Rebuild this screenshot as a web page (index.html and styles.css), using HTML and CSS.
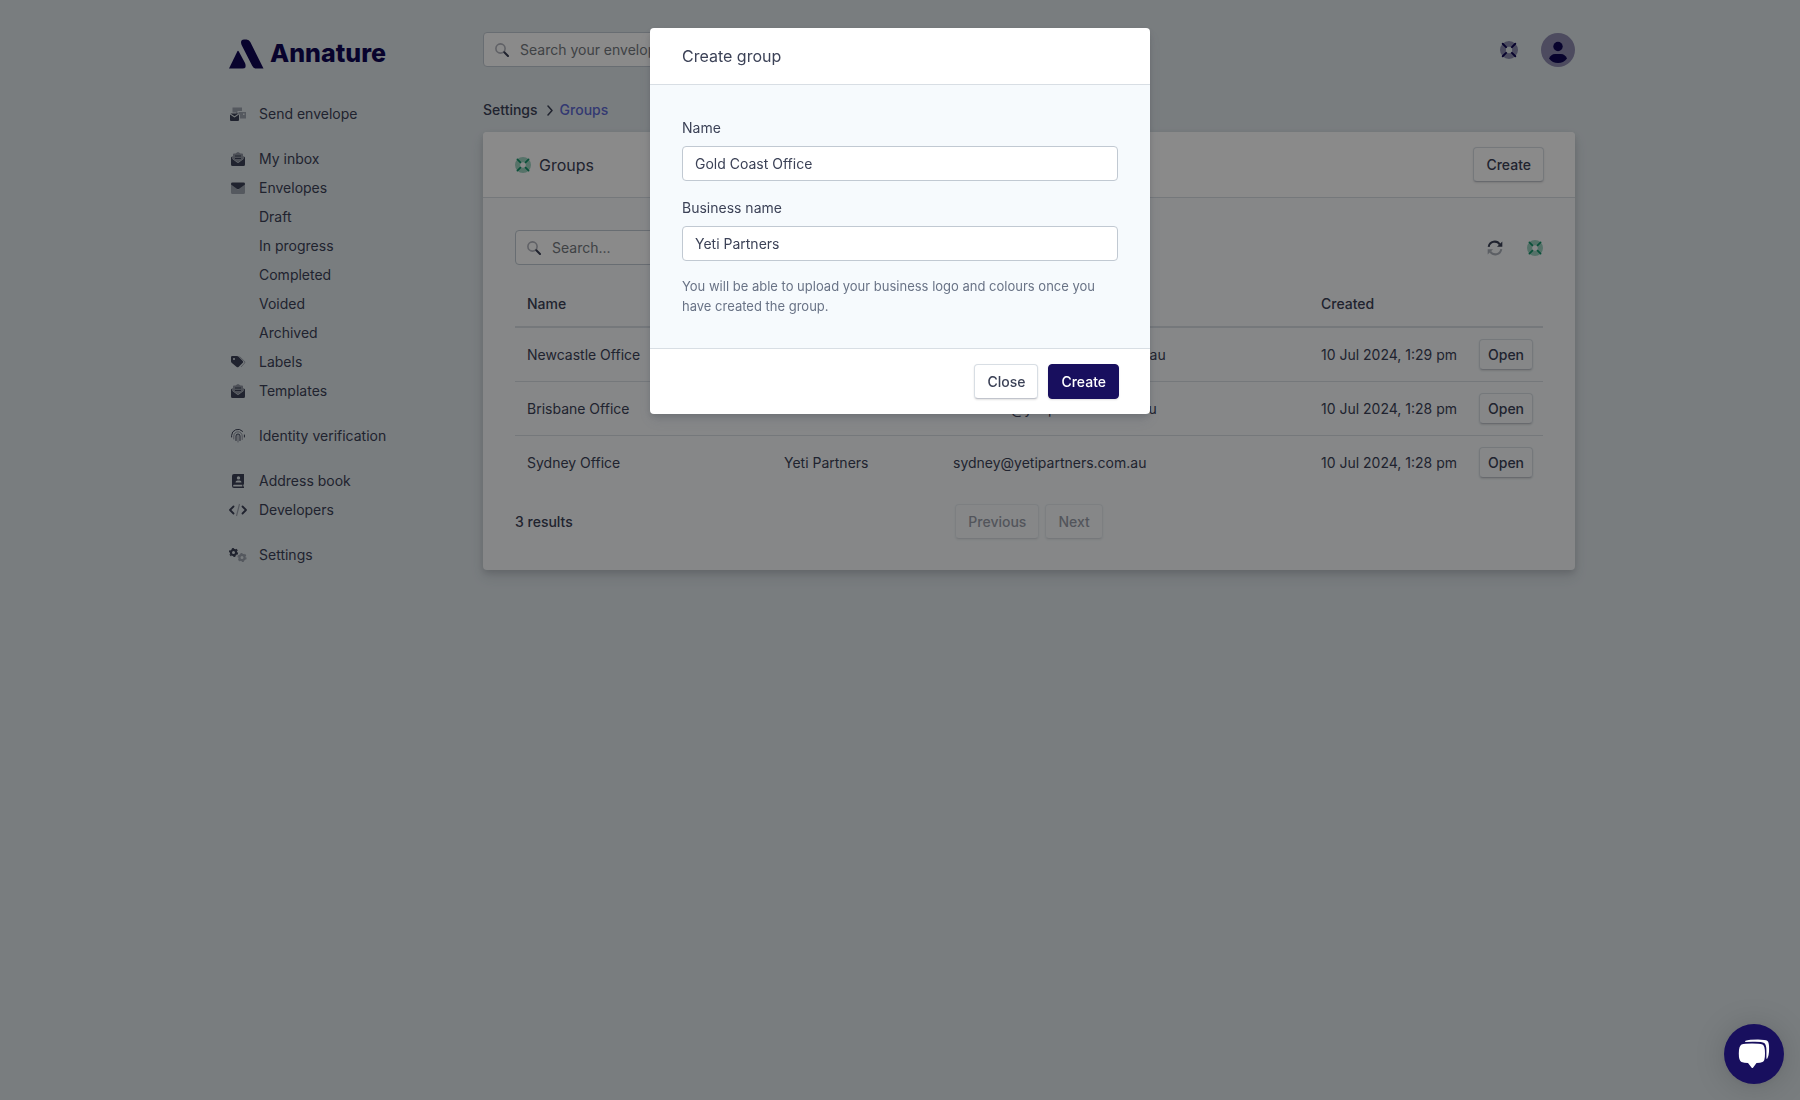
FILE: index.html
```html
<!DOCTYPE html>
<html lang="en">
<head>
    <meta charset="UTF-8">
    <meta name="viewport" content="width=device-width, initial-scale=1.0">
    <title>Groups - Annature</title>
    <link rel="stylesheet" href="styles.css">
</head>
<body>
    <!-- shared icons -->
    <svg class="sprite" aria-hidden="true">
        <symbol id="icon-ring" viewBox="0 0 16 16">
            <path opacity=".4" fill-rule="evenodd" d="M8 0a8 8 0 1 0 0 16A8 8 0 0 0 8 0zm0 5.200a2.800 2.800 0 1 1 0 5.600 2.800 2.800 0 0 1 0-5.600z"/>
            <path d="M2.400 2.400l3 3M13.600 2.400l-3 3M2.400 13.600l3-3M13.600 13.600l-3-3" stroke="currentColor" stroke-width="1.700" stroke-linecap="round"/>
        </symbol>
        <symbol id="icon-search" viewBox="0 0 14 14">
            <circle cx="5.500" cy="5.500" r="4.600" fill="none" stroke="currentColor" stroke-width="1.600" opacity=".4"/>
            <path d="M9.300 9.300l3.700 3.700" stroke="currentColor" stroke-width="2" stroke-linecap="round"/>
        </symbol>
        <symbol id="icon-open" viewBox="0 0 16 16">
            <path opacity=".5" d="M3 8V3.500Q3 2.500 4 2.500h1.500L7 1.400q1-.8 2 0l1.500 1.100H12q1 0 1 1V8l-4.200 3q-.8.500-1.600 0z"/>
            <path d="M1 6.500L2.500 5v3.100l4.600 3.300q.9.600 1.800 0l4.600-3.300V5L15 6.500v7a1.500 1.500 0 0 1-1.500 1.500h-11A1.500 1.500 0 0 1 1 13.500z"/>
            <path d="M5 4.500h6v1H5zM5 7h6v1H5z"/>
        </symbol>
    </svg>

    <div class="page">
        <aside class="sidebar">
            <a class="logo" href="#">
                <svg width="36" height="30" viewBox="0 0 36 30" aria-hidden="true">
                    <path d="M1 29.500L9.300 12.500Q10 11.200 10.800 12.500L17 24q2.300 5.500-2.500 5.500z"/>
                    <path d="M16 .5h2.500q2.600 0 3.800 2.600L35.500 29.500H28q-2.400 0-3.700-2.600L13.600 6Q11.700.8 16 .5z"/>
                </svg>
                <span>Annature</span>
            </a>
            <nav class="menu">
                <ul>
                    <li><a href="#">
                        <svg class="icon" viewBox="0 0 16 16" aria-hidden="true"><path opacity=".4" d="M2.500 1.500h9.500V5H7.500v3H6V6.500H2.500zM8.500 6H16v6.500H10V8.500H8.500zM13 7.500v1.500h1.500V7.500z" fill-rule="evenodd"/><path d="M0 8.500l4.500 3 4.500-3V14a1 1 0 0 1-1 1H1a1 1 0 0 1-1-1zM.5 7.500h8L4.500 10.200z"/></svg>
                        Send envelope</a></li>
                </ul>
                <ul>
                    <li><a href="#"><svg class="icon" aria-hidden="true"><use href="#icon-open"/></svg>My inbox</a></li>
                    <li><a href="#">
                        <svg class="icon" viewBox="0 0 16 16" aria-hidden="true"><path opacity=".4" d="M1 4l7 6 7-6v8.500A1.500 1.500 0 0 1 13.500 14h-11A1.500 1.500 0 0 1 1 12.500z"/><path d="M1 4.500V3.500Q1 2.500 2.500 2.500h11q1.500 0 1.500 1v1L9 9Q8 9.700 7 9z"/></svg>
                        Envelopes</a>
                        <ul class="submenu">
                            <li><a href="#">Draft</a></li>
                            <li><a href="#">In progress</a></li>
                            <li><a href="#">Completed</a></li>
                            <li><a href="#">Voided</a></li>
                            <li><a href="#">Archived</a></li>
                        </ul>
                    </li>
                    <li><a href="#">
                        <svg class="icon" viewBox="0 0 16 16" aria-hidden="true"><path opacity=".4" fill="none" stroke="currentColor" d="M9.500 2.500l5 4.800q.7.900 0 1.800L11 13"/><path fill-rule="evenodd" d="M1 3.200Q1 2 2.200 2H7q.8 0 1.400.6l4.400 4.300q.9.900 0 1.800l-4.300 4.200q-.9.900-1.800 0L1.600 8.700Q1 8.100 1 7.300zM4 4a1 1 0 1 0 0 2 1 1 0 0 0 0-2z"/></svg>
                        Labels</a></li>
                    <li><a href="#"><svg class="icon" aria-hidden="true"><use href="#icon-open"/></svg>Templates</a></li>
                </ul>
                <ul>
                    <li><a href="#">
                        <svg class="icon stroked" viewBox="0 0 16 16" aria-hidden="true"><path d="M1.600 9V7.500a6.400 6.400 0 0 1 11-4.200M14.400 7v2"/><path opacity=".5" d="M3.800 11V8a4.200 4.200 0 0 1 8.400 0v3.500M8 7.500V14"/><path d="M6 12.500V8a2 2 0 0 1 4 0v4.500"/></svg>
                        Identity verification</a></li>
                </ul>
                <ul>
                    <li><a href="#">
                        <svg class="icon" viewBox="0 0 16 16" aria-hidden="true"><path fill-rule="evenodd" d="M4 1h10v10.500h-.7v2H14V15H4a2 2 0 0 1-2-2V3a2 2 0 0 1 2-2zm4.500 2.200a1.700 1.700 0 1 0 0 3.400 1.700 1.700 0 0 0 0-3.400zM5.500 9.500h6q0-2-2-2h-2q-2 0-2 2zM4 11.800a.8.800 0 0 0 0 1.700h8.300v-1.700z"/></svg>
                        Address book</a></li>
                    <li><a href="#">
                        <svg class="icon wide" viewBox="0 0 18 14" aria-hidden="true"><path fill="none" stroke="currentColor" stroke-width="1.800" stroke-linecap="round" stroke-linejoin="round" d="M4.500 3.500L1 7l3.500 3.500M13.500 3.500L17 7l-3.500 3.500"/><path opacity=".4" stroke="currentColor" stroke-width="1.200" d="M10.500 1l-3 12"/></svg>
                        Developers</a></li>
                </ul>
                <ul>
                    <li><a href="#">
                        <svg class="icon wide" viewBox="0 0 18 14" aria-hidden="true"><circle cx="4.500" cy="4.500" r="2.600" fill="none" stroke="currentColor" stroke-width="2.200"/><circle cx="4.500" cy="4.500" r="4" fill="none" stroke="currentColor" stroke-width="1.200" stroke-dasharray="2 2.190"/><g opacity=".4"><circle cx="13" cy="9.500" r="2.600" fill="none" stroke="currentColor" stroke-width="2.200"/><circle cx="13" cy="9.500" r="4" fill="none" stroke="currentColor" stroke-width="1.200" stroke-dasharray="2 2.190"/></g></svg>
                        Settings</a></li>
                </ul>
            </nav>
        </aside>

        <main class="main">
            <header class="topbar">
                <div class="search">
                    <svg width="14" height="14" aria-hidden="true"><use href="#icon-search"/></svg>
                    <input type="search" placeholder="Search your envelopes..." aria-label="Search your envelopes">
                </div>
                <div class="topbar-actions">
                    <a class="help" href="#" aria-label="Help"><svg width="18" height="18"><use href="#icon-ring"/></svg></a>
                    <button class="avatar" type="button" aria-label="Account">
                        <svg width="34" height="34" viewBox="0 0 34 34"><circle cx="17" cy="13.500" r="4.700"/><path d="M8 25.500q2-4.500 6-4.500h6q4 0 6 4.500Q22.500 30 17 30t-9-4.500z"/></svg>
                    </button>
                </div>
            </header>

            <nav class="breadcrumb" aria-label="Breadcrumb">
                <a href="#">Settings</a>
                <svg width="8" height="12" viewBox="0 0 8 12" aria-hidden="true"><path d="M2 2l4 4.500L2 11" fill="none" stroke="currentColor" stroke-width="1.500" stroke-linecap="round" stroke-linejoin="round"/></svg>
                <a class="current" href="#">Groups</a>
            </nav>

            <section class="card">
                <div class="card-header">
                    <h1><svg class="green" width="16" height="16" aria-hidden="true"><use href="#icon-ring"/></svg>Groups</h1>
                    <button class="btn" type="button">Create</button>
                </div>
                <div class="card-body">
                    <div class="toolbar">
                        <div class="search">
                            <svg width="14" height="14" aria-hidden="true"><use href="#icon-search"/></svg>
                            <input type="search" placeholder="Search..." aria-label="Search groups">
                        </div>
                        <div class="toolbar-actions">
                            <button class="icon-btn" type="button" aria-label="Refresh">
                                <svg width="16" height="16" viewBox="0 0 16 16"><path d="M1.700 6.800A6 6 0 0 1 12.800 4.600" fill="none" stroke="currentColor" stroke-width="2"/><path d="M15.300 1.500v5.300H10z"/><g opacity=".4"><path d="M14.300 9.200A6 6 0 0 1 3.200 11.400" fill="none" stroke="currentColor" stroke-width="2"/><path d="M.7 14.500V9.200H6z"/></g></svg>
                            </button>
                            <a class="green" href="#" aria-label="Help with groups"><svg width="16" height="16"><use href="#icon-ring"/></svg></a>
                        </div>
                    </div>
                    <table>
                        <thead>
                            <tr><th class="col-name">Name</th><th class="col-business">Business name</th><th class="col-email">Email</th><th class="col-created">Created</th><th></th></tr>
                        </thead>
                        <tbody>
                            <tr><td>Newcastle Office</td><td>Yeti Partners</td><td>newcastle@yetipartners.com.au</td><td>10 Jul 2024, 1:29 pm</td><td><button class="btn btn-sm" type="button">Open</button></td></tr>
                            <tr><td>Brisbane Office</td><td>Yeti Partners</td><td>brisbane@yetipartners.com.au</td><td>10 Jul 2024, 1:28 pm</td><td><button class="btn btn-sm" type="button">Open</button></td></tr>
                            <tr><td>Sydney Office</td><td>Yeti Partners</td><td>sydney@yetipartners.com.au</td><td>10 Jul 2024, 1:28 pm</td><td><button class="btn btn-sm" type="button">Open</button></td></tr>
                        </tbody>
                    </table>
                    <div class="table-footer">
                        <span class="results">3 results</span>
                        <div class="pager">
                            <button class="btn" type="button" disabled>Previous</button>
                            <button class="btn" type="button" disabled>Next</button>
                        </div>
                    </div>
                </div>
            </section>
        </main>
    </div>

    <div class="overlay">
        <form class="modal" role="dialog" aria-modal="true" aria-labelledby="modal-title">
            <h2 class="modal-header" id="modal-title">Create group</h2>
            <div class="modal-body">
                <div class="field">
                    <label for="group-name">Name</label>
                    <input type="text" id="group-name" value="Gold Coast Office">
                </div>
                <div class="field">
                    <label for="business-name">Business name</label>
                    <input type="text" id="business-name" value="Yeti Partners">
                </div>
                <p>You will be able to upload your business logo and colours once you have created the group.</p>
            </div>
            <div class="modal-footer">
                <button class="btn" type="button">Close</button>
                <button class="btn btn-primary" type="submit">Create</button>
            </div>
        </form>
    </div>

    <button class="chat" type="button" aria-label="Open chat">
        <svg width="32" height="32" viewBox="0 0 32 32" aria-hidden="true">
            <path d="M7.500 2.800Q11 1.500 20 1.500q7.500 0 9.500 1.500 1.700 1.500 1.600 8 0 7-2.100 10l-.6-.5V12.500q0-6-2.200-7.500Q24 3.800 17 3.700 12 3.600 7 3.900z"/>
            <path d="M3.500 6.500Q6.500 5.500 14 5.500t10.500 1Q27 7.500 27 15.500T24.500 24q-2 .9-6 1l-3.300 4.500q-.9 1-1.700 0L10 25q-4-.1-6.500-1Q.8 23 .8 15.500T3.500 6.500z"/>
        </svg>
    </button>
</body>
</html>
```

FILE: styles.css
```css
* {
    box-sizing: border-box;
}
body {
    margin: 0;
    min-height: 100vh;
    background-color: #e0e7eb;
    color: #3c4257;
    font-family: Inter, "Liberation Sans", sans-serif;
    font-size: 14px;
    line-height: 21px;
}
a {
    color: inherit;
    text-decoration: none;
}
svg {
    display: block;
    fill: currentColor;
    flex: none;
}
ul {
    list-style: none;
    margin: 0;
    padding: 0;
}
input, button {
    font: inherit;
    color: inherit;
}
.sprite {
    position: absolute;
    width: 0;
    height: 0;
}
.page {
    display: flex;
    max-width: 1350px;
    margin: 0 auto;
    padding-top: 32px;
}

/* sidebar */
.sidebar {
    flex: 0 0 258px;
}
.logo {
    display: flex;
    align-items: center;
    gap: 6px;
    height: 43px;
    padding-left: 3px;
    color: #0f0754;
    font-size: 25px;
    font-weight: 800;
}
.menu {
    display: flex;
    flex-direction: column;
    gap: 16px;
    padding-top: 24px;
}
.menu a {
    display: flex;
    align-items: center;
    gap: 13px;
    height: 29px;
    padding-left: 5px;
}
.menu .icon {
    width: 16px;
    height: 16px;
}
.menu .wide {
    width: 18px;
    margin: 0 -1px;
}
.menu .stroked {
    fill: none;
    stroke: currentColor;
    stroke-linecap: round;
}
.submenu {
    padding-left: 29px;
}

/* top bar */
.main {
    flex: 1;
    min-width: 0;
}
.topbar, .topbar-actions, .toolbar, .toolbar-actions {
    display: flex;
    align-items: center;
}
.topbar, .toolbar, .card-header {
    justify-content: space-between;
}
.topbar-actions {
    gap: 23px;
}
.help {
    color: #0f0754;
}
.avatar {
    width: 34px;
    height: 34px;
    padding: 0;
    border: none;
    border-radius: 50%;
    background-color: #8e8bb0;
    color: #0f0754;
}
.search {
    display: flex;
    align-items: center;
    gap: 11px;
    width: 380px;
    height: 35px;
    padding: 0 11px;
    background-color: #fff;
    border: 1px solid #c1c9d2;
    border-radius: 4px;
}
.search input {
    flex: 1;
    padding: 0;
    border: none;
    background: none;
    outline: none;
}
.search input::placeholder {
    color: #757a80;
}
.breadcrumb {
    display: flex;
    align-items: center;
    gap: 6px;
    padding: 32px 0 12px;
    font-weight: 500;
}
.breadcrumb svg {
    margin-left: 2px;
}
.breadcrumb .current {
    color: #5e6ad2;
}

/* groups card */
.card {
    background-color: #f7fafc;
    border-radius: 4px;
    box-shadow: 0 7px 14px rgba(60, 66, 87, 0.12), 0 3px 6px rgba(0, 0, 0, 0.12);
}
.card-header {
    display: flex;
    align-items: center;
    padding: 15px 31px 15px 32px;
    background-color: #fff;
    border-bottom: 1px solid #d8dee4;
    border-radius: 4px 4px 0 0;
}
.card-header h1 {
    display: flex;
    align-items: center;
    gap: 8px;
    margin: 0;
    font-size: 16px;
    font-weight: 400;
    line-height: 24px;
}
.green {
    color: #12946a;
}
.card-body {
    padding: 32px 32px 31px;
}
.toolbar-actions {
    gap: 24px;
}
.icon-btn {
    padding: 0;
    border: none;
    background: none;
}
.btn {
    height: 35px;
    padding: 0 12px;
    background-color: #fff;
    border: 1px solid #d8dee4;
    border-bottom-color: #c1c4cc;
    border-radius: 4px;
    box-shadow: 0 1px 2px rgba(0, 0, 0, 0.12);
    font-weight: 500;
    cursor: pointer;
}
.card-body .btn {
    background-color: transparent;
}
.btn-sm {
    display: block;
    height: 31px;
    padding: 0 8px;
}
.btn:disabled {
    opacity: 0.5;
    cursor: default;
}
.btn-primary {
    background-color: #180f5e;
    border-color: #180f5e;
    color: #fff;
}
table {
    width: 100%;
    margin-top: 16px;
    border-collapse: separate;
    border-spacing: 0;
    table-layout: fixed;
}
th {
    height: 47px;
    padding: 0 12px;
    border-bottom: 2px solid #d8dee4;
    font-weight: 500;
    text-align: left;
}
td {
    height: 54px;
    padding: 0 12px;
    border-bottom: 1px solid #d8dee4;
    white-space: nowrap;
}
tr:last-child td {
    height: 53px;
    border-bottom: none;
}
.col-name {
    width: 25%;
}
.col-business {
    width: 169px;
}
.col-created {
    width: 158px;
}
th:last-child {
    width: 76px;
}
.table-footer {
    display: grid;
    grid-template-columns: 1fr auto 1fr;
    align-items: center;
    padding-top: 15px;
}
.results {
    font-weight: 500;
}
.pager {
    display: flex;
    gap: 6px;
}

/* create group modal */
.overlay {
    position: fixed;
    inset: 0;
    display: flex;
    justify-content: center;
    align-items: flex-start;
    padding-top: 28px;
    background-color: rgba(0, 0, 0, 0.46);
}
.modal {
    width: 500px;
    background-color: #fff;
    border-radius: 4px;
    box-shadow: 0 7px 14px rgba(60, 66, 87, 0.12), 0 3px 6px rgba(0, 0, 0, 0.12);
}
.modal-header {
    margin: 0;
    padding: 16px 32px;
    border-bottom: 1px solid #d8dee4;
    font-size: 16px;
    font-weight: 400;
    line-height: 24px;
}
.modal-body {
    padding: 31px 32px 32px;
    background-color: #f6fafd;
}
.field {
    margin-bottom: 15px;
}
.field label {
    display: block;
    margin-bottom: 6px;
    line-height: 24px;
}
.field input {
    display: block;
    width: 100%;
    height: 35px;
    padding: 0 12px;
    background-color: #fff;
    border: 1px solid #c1c9d2;
    border-radius: 4px;
}
.modal-body p {
    margin: 0;
    color: #697386;
    font-size: 13px;
    line-height: 20px;
}
.modal-footer {
    display: flex;
    justify-content: flex-end;
    gap: 10px;
    padding: 15px 31px;
    border-top: 1px solid #d8dee4;
}

.chat {
    position: fixed;
    right: 16px;
    bottom: 16px;
    display: flex;
    align-items: center;
    justify-content: center;
    width: 60px;
    height: 60px;
    padding: 0;
    background-color: #180f5e;
    border: none;
    border-radius: 50%;
    box-shadow: 0 1px 6px rgba(0, 0, 0, 0.06), 0 2px 32px rgba(0, 0, 0, 0.16);
    color: #fff;
}
```
